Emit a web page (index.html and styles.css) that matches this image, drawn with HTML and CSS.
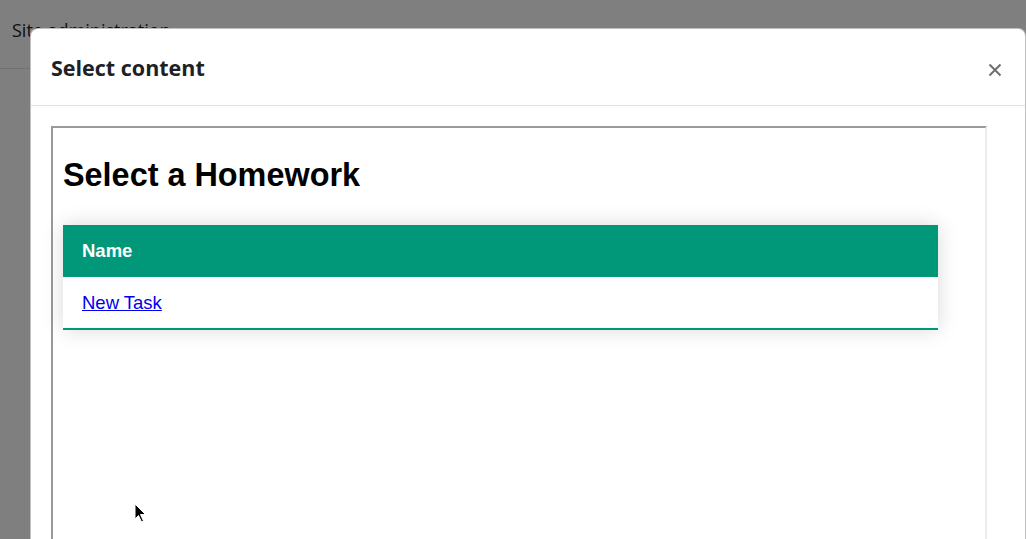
FILE: index.html
```html
<!DOCTYPE html>
<html lang="en">
<head>
<meta charset="utf-8">
<title>Select content</title>
<link rel="stylesheet" href="styles.css">
</head>
<body>
<div class="page">
  <div class="navbar">Site administration</div>
</div>
<div class="backdrop"></div>
<div class="modal">
  <div class="modal-header">
    <h5 class="modal-title">Select content</h5>
    <button class="close" aria-label="Close">
      <svg width="14" height="14" viewBox="0 0 14 14"><path d="M1.5 1.5 L12.5 12.5 M12.5 1.5 L1.5 12.5" stroke="#6f6f6f" stroke-width="2" fill="none"/></svg>
    </button>
  </div>
  <div class="modal-body">
    <div class="frame">
      <h1 class="frame-title">Select a Homework</h1>
      <table class="styled-table">
        <thead>
          <tr><th>Name</th></tr>
        </thead>
        <tbody>
          <tr><td><a href="#">New Task</a></td></tr>
        </tbody>
      </table>
    </div>
  </div>
</div>
<svg class="cursor" width="14" height="22" viewBox="0 0 14 22">
  <path d="M1 1 L1 16 L4.5 12.5 L7.5 19 L9.5 18 L6.5 11.5 L11.5 11.5 Z" fill="#000" stroke="#fff" stroke-width="1"/>
</svg>
</body>
</html>
```

FILE: styles.css
```css
html, body {
  margin: 0;
  padding: 0;
  height: 100%;
  overflow: hidden;
}
body {
  background: #fff;
  font-family: "Open Sans", "Noto Sans", sans-serif;
  color: #1d2125;
  position: relative;
}
.page {
  height: 100%;
}
.navbar {
  height: 69px;
  box-sizing: border-box;
  border-bottom: 1px solid #dee2e6;
  padding: 18px 12px 0;
  font-size: 18px;
  line-height: 24px;
}
.backdrop {
  position: absolute;
  inset: 0;
  background: rgba(0, 0, 0, 0.5);
}
.modal {
  position: absolute;
  left: 30px;
  top: 28px;
  width: 996px;
  height: 600px;
  background: #fff;
  border: 1px solid rgba(0, 0, 0, 0.25);
  border-radius: 8px;
  box-sizing: border-box;
}
.modal-header {
  height: 77px;
  box-sizing: border-box;
  border-bottom: 1px solid #dee2e6;
  display: flex;
  align-items: center;
  justify-content: space-between;
  padding: 0 22px 0 20px;
}
.modal-title {
  margin: 0;
  margin-top: 1px;
  font-size: 21.5px;
  font-weight: 700;
  line-height: 28px;
  color: #1d2125;
}
.close {
  border: 0;
  background: none;
  padding: 0;
  width: 16px;
  height: 16px;
  display: flex;
  align-items: center;
  justify-content: center;
  margin-top: 6px;
}
.modal-body {
  padding: 20px 20px 0 20px;
}
.frame {
  width: 936px;
  height: 480px;
  box-sizing: border-box;
  border-style: solid;
  border-width: 2px;
  border-color: #9a9a9a #ececec #ececec #9a9a9a;
  padding: 29px 10px 0 10px;
  font-family: "Liberation Sans", Arial, sans-serif;
  color: #000;
}
.frame-title {
  margin: 0 0 31px;
  font-size: 32.4px;
  font-weight: 700;
  line-height: 37px;
}
.styled-table {
  width: 875px;
  border-collapse: collapse;
  box-shadow: 0 0 20px rgba(0, 0, 0, 0.15);
  font-size: 18.5px;
}
.styled-table th {
  background: #009879;
  color: #fff;
  text-align: left;
  font-weight: 700;
  padding: 15px 19px;
  line-height: 22px;
}
.styled-table td {
  padding: 15px 19px;
  line-height: 21px;
  background: #fff;
}
.styled-table tbody tr {
  border-bottom: 2px solid #009879;
}
.styled-table a {
  color: #0000ee;
}
.cursor {
  position: absolute;
  left: 134px;
  top: 503px;
}
```
